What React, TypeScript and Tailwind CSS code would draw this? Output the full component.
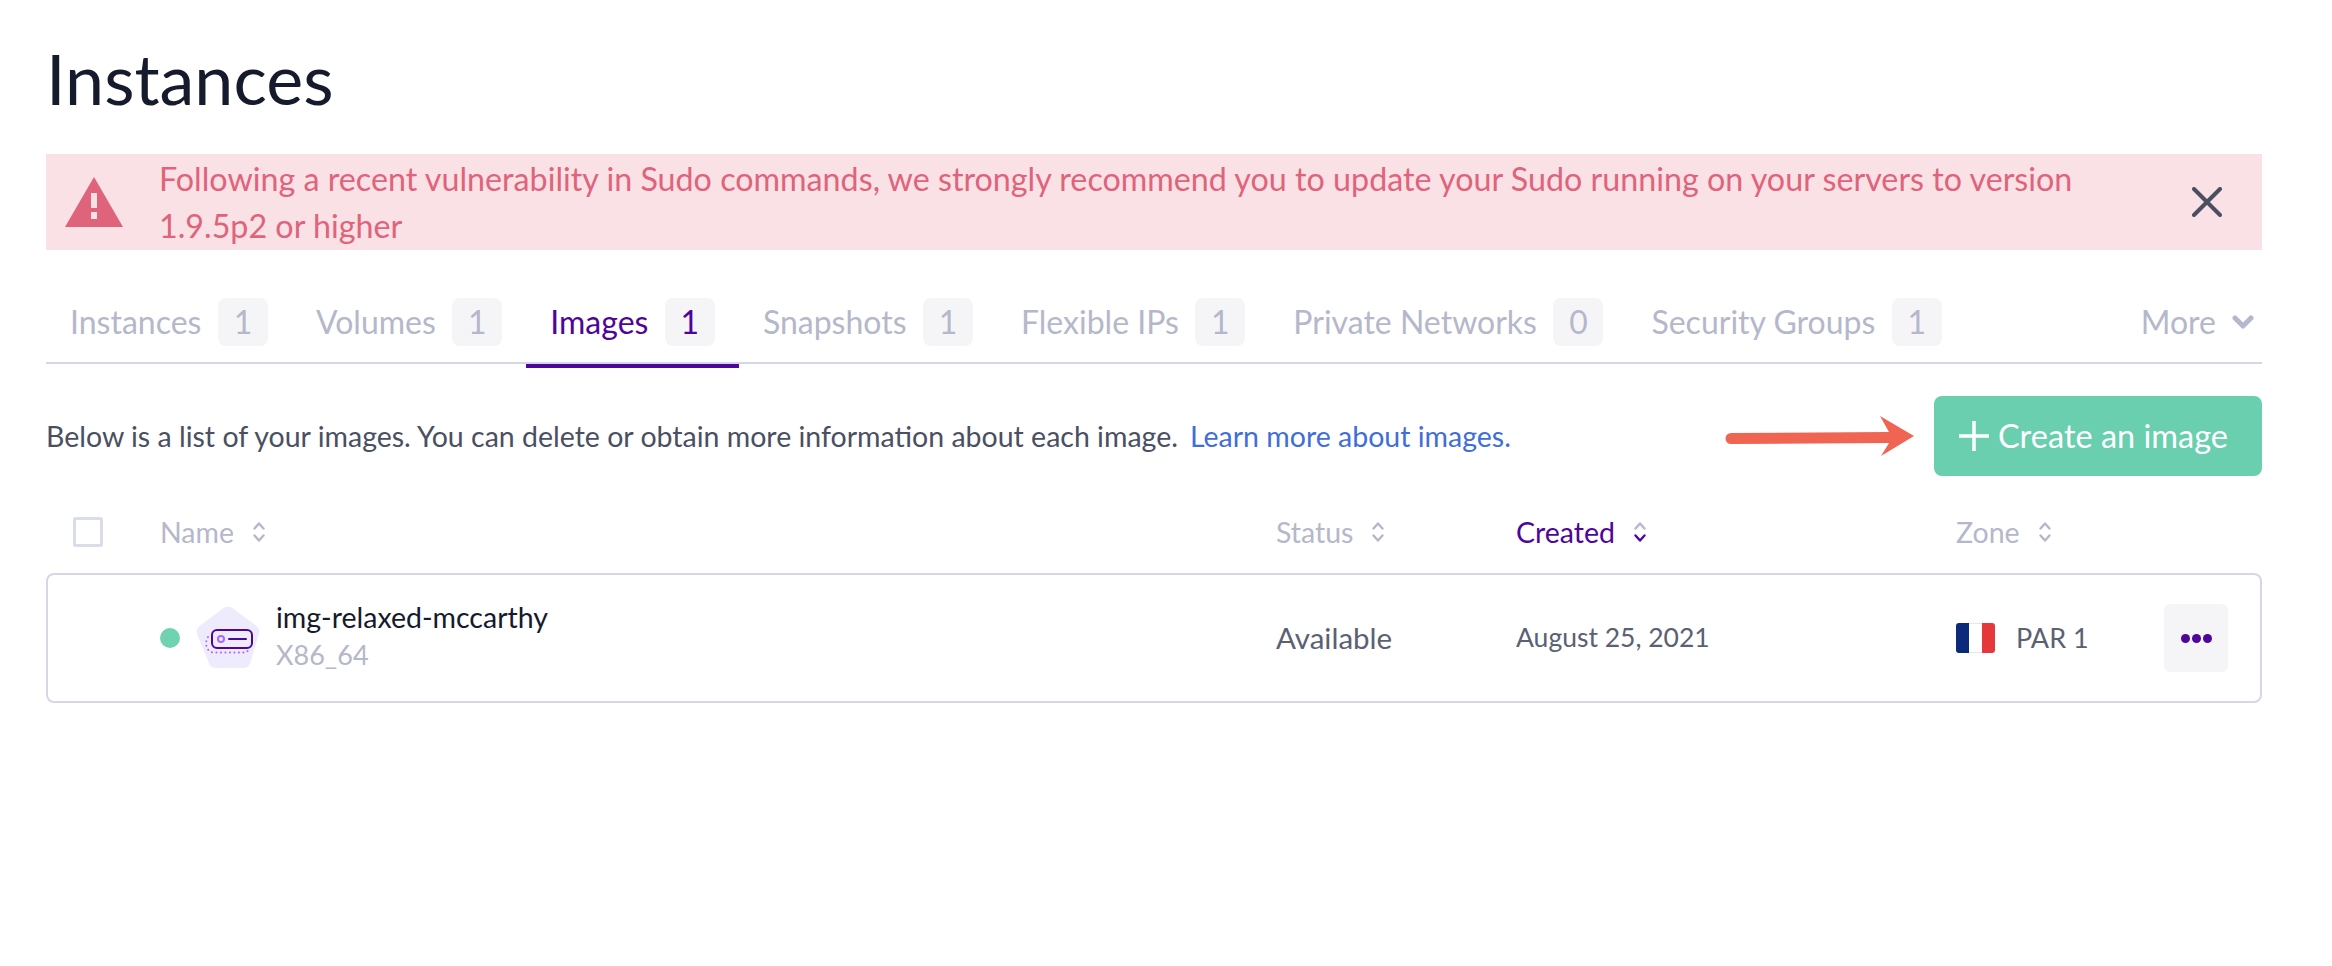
import React from 'react';

const tabs = [
  { label: 'Instances', count: 1 },
  { label: 'Volumes', count: 1 },
  { label: 'Images', count: 1, active: true },
  { label: 'Snapshots', count: 1 },
  { label: 'Flexible IPs', count: 1 },
  { label: 'Private Networks', count: 0 },
  { label: 'Security Groups', count: 1 },
];

const SortIcon = ({ active }: { active?: boolean }) => (
  <svg width="14" height="22" viewBox="0 0 14 22" fill="none" strokeWidth="2.4" strokeLinecap="round" strokeLinejoin="round" className={active ? 'stroke-[#4f0599]' : 'stroke-[#b5b7ca]'}>
    <path d="M2.5 7.5 7 2.5l4.5 5" className={active ? 'stroke-[#b5b7ca]' : ''} />
    <path d="M2.5 14.5 7 19.5l4.5-5" />
  </svg>
);

const HeaderCell = ({ label, active }: { label: string; active?: boolean }) => (
  <div className={`flex items-center gap-[18px] text-[28.5px] ${active ? 'text-[#4f0599]' : 'text-[#b5b7ca]'}`}>
    {label}
    <SortIcon active={active} />
  </div>
);

const ImageIcon = () => (
  <svg width="64" height="62" viewBox="0 0 64 62" fill="none">
    <path d="M27 1.5a8 8 0 0 1 10 0l23 17a8 8 0 0 1 3 8.5l-8.500 28a8 8 0 0 1-7.500 6H20a8 8 0 0 1-7.500-6L1 27a8 8 0 0 1 3-8.500z" fill="#eeebfd" />
    <rect x="16" y="23" width="40" height="18" rx="5" stroke="#4f0599" strokeWidth="2" />
    <circle cx="25" cy="32" r="3" stroke="#a968ff" strokeWidth="2" />
    <path d="M33 32h17" stroke="#4f0599" strokeWidth="2" strokeLinecap="round" />
    <path d="M12 30c-2.500 4-2.500 9 0 12.500 1.500 2 3.500 3 6 3h30c2 0 3.500-.8 4.500-3" stroke="#a968ff" strokeWidth="2" strokeLinecap="round" strokeDasharray="0.1 4.400" />
  </svg>
);

const FlagFr = () => (
  <div className="flex h-[30px] w-[39px] overflow-hidden rounded-[3px]">
    <div className="flex-1 bg-[#0b2a7a]" />
    <div className="flex-1 bg-white border-y border-[#e5e6ee]" />
    <div className="flex-1 bg-[#e5383b]" />
  </div>
);

export default function App() {
  return (
    <div className="min-h-[966px] bg-white px-[46px] pt-[34px] pr-[70px] font-['Lato',sans-serif] text-[#5b6073]">
      <h1 className="text-[70px] leading-[88px] text-[#151a2d]">Instances</h1>

      <div className="mt-[32px] flex h-[96px] items-center bg-[#fae1e5] pl-[19px] pr-[40px] text-[32.25px] leading-[47px] text-[#e0637c]">
        <svg width="58" height="50" viewBox="0 0 58 50" className="shrink-0">
          <path d="M29 0 58 50H0z" fill="#e0637c" />
          <rect x="26" y="16" width="6" height="15" fill="#fae1e5" />
          <rect x="26" y="35" width="6" height="7" fill="#fae1e5" />
        </svg>
        <p className="ml-[36px] flex-1 pr-[110px]">
          Following a recent vulnerability in Sudo commands, we strongly recommend you to update your Sudo running on your servers to version 1.9.5p2 or higher
        </p>
        <svg width="30" height="30" viewBox="0 0 30 30" fill="none" stroke="#4a4f62" strokeWidth="4" strokeLinecap="round" className="shrink-0">
          <path d="M2 2l26 26M28 2 2 28" />
        </svg>
      </div>

      <div className="mt-[48px] flex h-[66px] items-start border-b-2 border-[#d5d7e6] text-[32px] text-[#b5b7ca]">
        {tabs.map((t) => (
          <div key={t.label} className={`flex h-[70px] items-start gap-[16.5px] px-[24px] ${t.active ? 'border-b-4 border-[#4f0599] text-[#4f0599]' : ''}`}>
            <span className="leading-[48px]">{t.label}</span>
            <span className="flex h-[48px] w-[50px] items-center justify-center rounded-[8px] bg-[#f5f5f8]">{t.count}</span>
          </div>
        ))}
        <div className="ml-auto flex h-[48px] items-center gap-[16px] pr-[8px]">
          More
          <svg width="22" height="15" viewBox="0 0 22 15" fill="none" stroke="#b5b7ca" strokeWidth="5" strokeLinecap="round" strokeLinejoin="round">
            <path d="M3 3l8 8 8-8" />
          </svg>
        </div>
      </div>

      <div className="mt-[32px] flex h-[80px] items-center text-[28.5px] text-[#4a4f62]">
        <p>
          Below is a list of your images. You can delete or obtain more information about each image.
          <span className="ml-3 text-[#3f6ed8]">Learn more about images</span>
          <span className="text-[#3f6ed8]">.</span>
        </p>
        <svg width="190" height="54" viewBox="0 0 190 54" className="ml-auto mr-[20px] shrink-0">
          <path d="M7 24 165 23 156 7 190 27 157 47 165 34 7 35A5.500 5.500 0 0 1 7 24z" fill="#ef6552" />
        </svg>
        <button className="flex h-[80px] w-[328px] shrink-0 items-center gap-[9px] rounded-[8px] bg-[#69cfae] pl-[25px] text-[32.5px] text-white">
          <svg width="30" height="30" viewBox="0 0 30 30" fill="none" stroke="white" strokeWidth="3.500" className="shrink-0">
            <path d="M15 0v30M0 15h30" />
          </svg>
          Create an image
        </button>
      </div>

      <div className="mt-[35px] grid h-[40px] grid-cols-[114px_1116px_240px_1fr] items-center">
        <div className="ml-[27px] h-[30px] w-[30px] rounded-[3px] border-[3px] border-[#d9dce9]" />
        <HeaderCell label="Name" />
        <HeaderCell label="Status" />
        <div className="grid grid-cols-[440px_1fr]">
          <HeaderCell label="Created" active />
          <HeaderCell label="Zone" />
        </div>
      </div>

      <div className="mt-[22px] grid h-[130px] grid-cols-[112px_1116px_240px_1fr] items-center rounded-[8px] border-2 border-[#d5d7e6] text-[29.5px]">
        <div />
        <div className="flex items-center gap-[16px]">
          <div className="h-[20px] w-[20px] rounded-full bg-[#6fd2b1]" />
          <ImageIcon />
          <div className="pb-[3px] text-[28.5px]">
            <div className="-mt-[3px] leading-[40px] text-[#151a2d]">img-relaxed-mccarthy</div>
            <div className="text-[27px] leading-[36px] text-[#b5b7ca]">X86_64</div>
          </div>
        </div>
        <div>Available</div>
        <div className="grid grid-cols-[440px_1fr] items-center text-[27px]">
          <div className="text-[26.5px]">August 25, 2021</div>
          <div className="flex items-center">
            <FlagFr />
            <span className="ml-[21px]">PAR 1</span>
            <div className="ml-auto mr-[32px] flex h-[68px] w-[64px] items-center justify-center gap-[2px] rounded-[6px] bg-[#f5f5f8]">
              <span className="h-[9px] w-[9px] rounded-full bg-[#4f0599]" />
              <span className="h-[9px] w-[9px] rounded-full bg-[#4f0599]" />
              <span className="h-[9px] w-[9px] rounded-full bg-[#4f0599]" />
            </div>
          </div>
        </div>
      </div>
    </div>
  );
}
